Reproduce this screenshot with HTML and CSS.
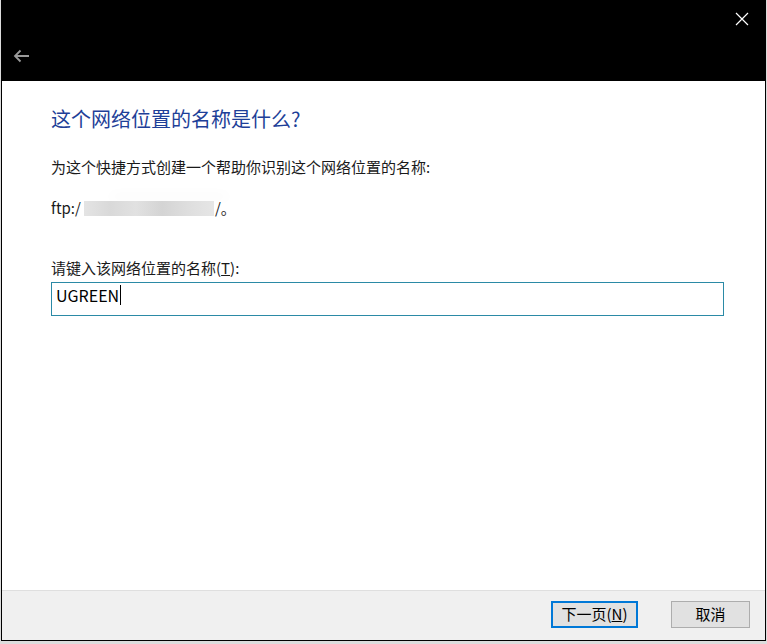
FILE: index.html
```html
<!DOCTYPE html>
<html lang="zh-CN">
<head>
    <meta charset="UTF-8">
    <title>添加网络位置</title>
    <link rel="stylesheet" href="styles.css">
</head>
<body>
    <div class="window">
        <!-- black title area -->
        <div class="header">
            <div class="header-top">
                <svg class="close" width="14" height="14" viewBox="0 0 14 14">
                    <path d="M1 1 L13 13 M13 1 L1 13" stroke="#fff" stroke-width="1.2" fill="none"/>
                </svg>
            </div>
            <svg class="back" width="17" height="14" viewBox="0 0 17 14">
                <path d="M16 7 H2 M7.5 1.5 L2 7 L7.5 12.5" stroke="#9a9a9a" stroke-width="1.8" fill="none"/>
            </svg>
        </div>

        <div class="content">
            <h1 class="title">这个网络位置的名称是什么?</h1>
            <p class="text">为这个快捷方式创建一个帮助你识别这个网络位置的名称:</p>
            <p class="text url">ftp:/<span class="blur"></span>/。</p>
            <label class="text label" for="name">请键入该网络位置的名称(<u>T</u>):</label>
            <div class="input">
                <span>UGREEN</span><span class="caret"></span>
            </div>
        </div>

        <div class="footer">
            <div class="btn primary">下一页(<u>N</u>)</div>
            <div class="btn">取消</div>
        </div>
    </div>
</body>
</html>
```

FILE: styles.css
```css
body {
    margin: 0;
    padding: 0;
    background-color: #dcdcdc;
    font-family: "Noto Sans CJK SC", "Microsoft YaHei", sans-serif;
    color: #000;
}

.window {
    box-sizing: border-box;
    width: 765px;
    height: 641px;
    margin-left: 1px;
    border: 1px solid #000;
    background-color: #fff;
    display: flex;
    flex-direction: column;
}

.header {
    height: 80px;
    background-color: #000;
    display: flex;
    flex-direction: column;
}

.header-top {
    display: flex;
    justify-content: flex-end;
    padding: 11px 16px 0 0;
    height: 30px;
}

.back {
    margin: 7px 0 0 11px;
}

.content {
    flex: 1;
    padding: 24px 0 0 49px;
    display: flex;
    flex-direction: column;
    align-items: flex-start;
}

.title {
    margin: 0;
    font-size: 20px;
    line-height: 28px;
    font-weight: normal;
    color: #1e3f98;
}

.text {
    margin: 24px 0 0 0;
    font-size: 15px;
    line-height: 20px;
    color: #1a1a1a;
}

.url {
    margin-top: 21px;
    display: flex;
    align-items: center;
}

.blur {
    display: inline-block;
    width: 130px;
    height: 15px;
    margin: 0 1px 0 3px;
    background: linear-gradient(90deg, #e4e4e4 0%, #d9d9d9 20%, #e1e1e1 40%, #d4d4d4 60%, #dedede 80%, #e6e6e6 100%);
    box-shadow: 20px -12px 12px -6px #f4f4f4;
}

.label {
    margin-top: 40px;
}

.input {
    box-sizing: border-box;
    width: 673px;
    height: 34px;
    margin-top: 4px;
    border: 1px solid #2b8aa6;
    padding: 0 0 8px 4px;
    display: flex;
    align-items: center;
    font-size: 16px;
    line-height: 20px;
    color: #000;
}

.caret {
    display: inline-block;
    width: 1px;
    height: 20px;
    margin-left: 1px;
    background-color: #000;
}

.footer {
    height: 50px;
    border-top: 1px solid #dfdfdf;
    background-color: #f0f0f0;
    display: flex;
    justify-content: flex-end;
    padding: 10px 15px 0 0;
    box-sizing: border-box;
    gap: 33px;
    align-items: flex-start;
}

.btn {
    box-sizing: border-box;
    height: 27px;
    width: 79px;
    border: 1px solid #adadad;
    background-color: #e1e1e1;
    font-size: 15px;
    line-height: 24px;
    text-align: center;
    color: #000;
}

.btn.primary {
    width: 87px;
    border: 2px solid #0078d7;
    line-height: 22px;
}
```
